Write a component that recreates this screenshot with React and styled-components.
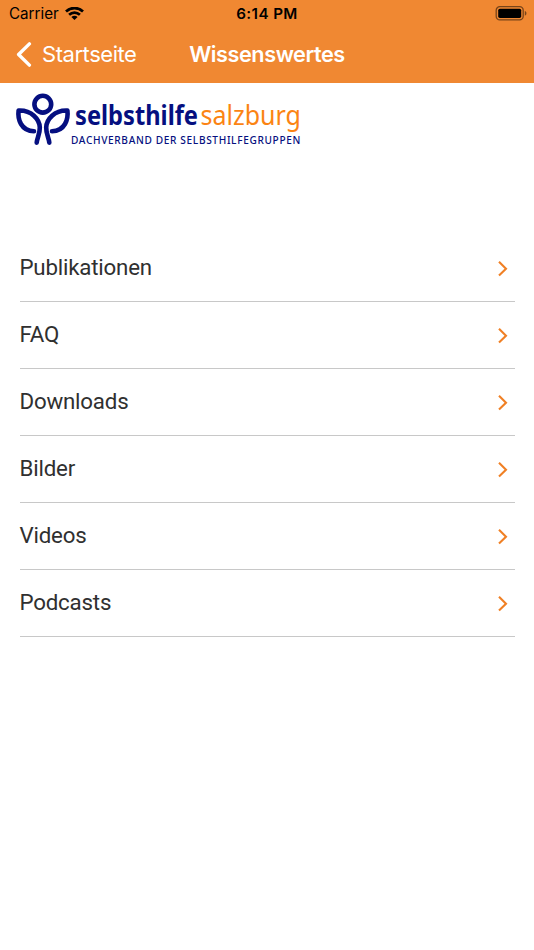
import React from "react";
import styled, { createGlobalStyle } from "styled-components";

const colors = {
  orange: "#f08832",
  logoOrange: "#fb8413",
  navy: "#050f80",
  text: "#303030",
  line: "#c8c8c8",
};

const GlobalStyle = createGlobalStyle`
  * {
    box-sizing: border-box;
  }
  body {
    background: #fff;
    margin: 0;
  }
`;

const Screen = styled.div`
  background: #fff;
  color: ${colors.text};
  font-family: Roboto, sans-serif;
  height: 950px;
  overflow: hidden;
  width: 534px;
`;
const Header = styled.header`
  background: ${colors.orange};
  font-family: Inter, sans-serif;
  height: 82.6px;
`;
const StatusBar = styled.div`
  align-items: center;
  color: #000;
  display: grid;
  font-size: 15.2px;
  grid-template-columns: 1fr auto 1fr;
  height: 27px;
  line-height: 28px;
  padding: 0 7px 0 9px;
`;
const Carrier = styled.div`
  align-items: center;
  display: flex;
  gap: 6px;
`;
const Clock = styled.div`
  font-weight: 600;
  letter-spacing: 0.4px;
  margin-right: 2px;
`;
const Battery = styled.svg`
  justify-self: end;
`;
const NavBar = styled.nav`
  align-items: center;
  color: #fff;
  display: grid;
  font-size: 22px;
  grid-template-columns: 1fr auto 1fr;
  height: 55px;
  line-height: 55px;
  padding: 0 16px;
`;
const Back = styled.a`
  align-items: center;
  display: flex;
  gap: 9px;
  letter-spacing: -0.45px;
`;
const Title = styled.h1`
  font-size: 21.7px;
  font-weight: 600;
  letter-spacing: -0.45px;
  margin: 0;
`;
const Logo = styled.svg`
  display: block;
`;
const List = styled.ul`
  list-style: none;
  margin: 0;
  padding: 82px 19.5px 0;
`;
const Item = styled.li`
  align-items: center;
  border-bottom: 1px solid ${colors.line};
  display: flex;
  font-size: 22.3px;
  height: 67.1px;
  justify-content: space-between;
  letter-spacing: -0.2px;
  padding-right: 6px;
`;
const Label = styled.span`
  padding-bottom: 1.6px;
`;

const items = ["Publikationen", "FAQ", "Downloads", "Bilder", "Videos", "Podcasts"];

const Leaf = () => (
  <path d="M36.7 59.6 C37 55 40 51 39.8 44.5 C39.5 36.5 31.5 27 18.6 27.6 C17.5 36 21 48 34 48.2" />
);

const BrandLogo = () => (
  <Logo width="320" height="70" viewBox="0 0 320 70">
    <g fill="none" stroke={colors.navy} strokeWidth="4.6" strokeLinecap="round" strokeLinejoin="round">
      <circle cx="42.8" cy="21.2" r="8.4" />
      <Leaf />
      <g transform="matrix(-1 0 0 1 86 0)">
        <Leaf />
      </g>
    </g>
    <g fontFamily="'Noto Sans', sans-serif">
      <text x="75" y="42.4" fontSize="26" fontWeight="700" fill={colors.navy} textLength="123" lengthAdjust="spacingAndGlyphs">selbsthilfe</text>
      <text x="200.5" y="42.4" fontSize="26.5" fill={colors.logoOrange} textLength="100.5" lengthAdjust="spacingAndGlyphs">salzburg</text>
      <text x="71" y="61.4" fontSize="10.9" fontWeight="500" fill={colors.navy} letterSpacing="0.7" textLength="230" lengthAdjust="spacingAndGlyphs">DACHVERBAND DER SELBSTHILFEGRUPPEN</text>
    </g>
  </Logo>
);

const WifiIcon = () => (
  <svg width="19" height="14" viewBox="0 0 19 14" fill="none" stroke="#000" strokeWidth="2.7">
    <path d="M1 4.5 C5.8 -0.1 13.2 -0.1 18 4.5" />
    <path d="M4.1 7.7 C7.2 4.8 11.8 4.8 14.9 7.7" />
    <path d="M6.4 10 C8.2 8.4 10.8 8.4 12.6 10 L9.5 13.1 Z" fill="#000" stroke="none" />
  </svg>
);

const App = () => (
  <>
    <GlobalStyle />
    <Screen>
      <Header>
        <StatusBar>
          <Carrier>
            Carrier
            <WifiIcon />
          </Carrier>
          <Clock>6:14 PM</Clock>
          <Battery width="32" height="16" viewBox="0 0 32 16">
            <rect x="1.2" y="0.7" width="27" height="13.2" rx="3.6" fill="none" stroke="#000" strokeOpacity="0.5" strokeWidth="1.3" />
            <rect x="3.2" y="2.7" width="23" height="9.2" rx="1.6" />
            <path d="M29.8 5.1 C32 5.8 32 9 29.8 9.7 Z" fillOpacity="0.5" />
          </Battery>
        </StatusBar>
        <NavBar>
          <Back>
            <svg width="17" height="26" viewBox="0 0 17 26" fill="none" stroke="#fff" strokeWidth="3.4" strokeLinecap="round" strokeLinejoin="round">
              <path d="M13.4 1.9 L2.6 12.5 L13.4 23.1" />
            </svg>
            Startseite
          </Back>
          <Title>Wissenswertes</Title>
        </NavBar>
      </Header>
      <BrandLogo />
      <List>
        {items.map(item => (
          <Item key={item}>
            <Label>{item}</Label>
            <svg width="11" height="18" viewBox="0 0 11 18" fill="none" stroke="#f08025" strokeWidth="2.1">
              <path d="M1 2.8 L8 9.7 L1 16.6" />
            </svg>
          </Item>
        ))}
      </List>
    </Screen>
  </>
);

export default App;
